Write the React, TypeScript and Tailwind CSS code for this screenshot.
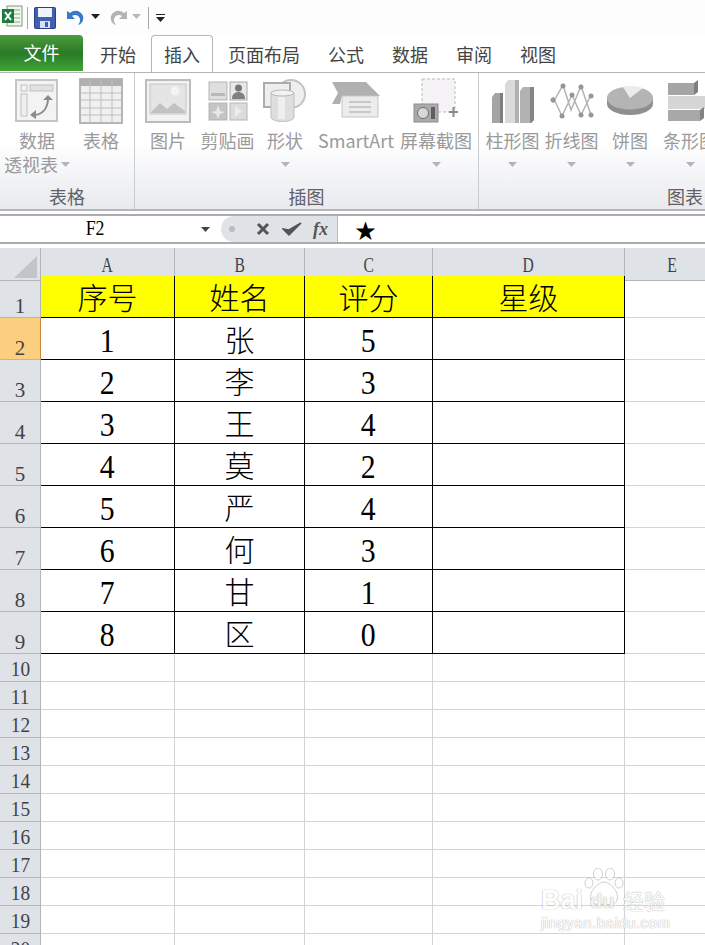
const uiFont = "font-['Noto_Sans_CJK_SC','Liberation_Sans',sans-serif]";
const sheetFont = "font-['Liberation_Serif','Noto_Sans_CJK_SC',serif]";

const tableRows = [
  ["1", "张", "5"],
  ["2", "李", "3"],
  ["3", "王", "4"],
  ["4", "莫", "2"],
  ["5", "严", "4"],
  ["6", "何", "3"],
  ["7", "甘", "1"],
  ["8", "区", "0"],
];
const emptyRows = ["10", "11", "12", "13", "14", "15", "16", "17", "18", "19", "20"];
const sheetCols = "grid-cols-[41px_134px_130px_128px_192px_96px]";

function Caret({ color = "#a3a3a3" }: { color?: string }) {
  return (
    <svg width="9" height="5" viewBox="0 0 9 5">
      <path d="M0 0h9L4.5 5z" fill={color} />
    </svg>
  );
}

function PivotIcon() {
  return (
    <svg width="44" height="44" viewBox="0 0 44 44">
      <rect x="1" y="1" width="41" height="41" fill="#f4f3f4" stroke="#c4c4c4" strokeWidth="2" />
      <rect x="6" y="6" width="6" height="6" fill="#f2f2f2" stroke="#c0c0c0" />
      <rect x="15" y="6" width="23" height="6" fill="#e2e2e2" stroke="#c0c0c0" />
      <rect x="6" y="15" width="6" height="22" fill="#efefef" stroke="#c0c0c0" />
      <path d="M18 36c8 0 14-5 15-15" fill="none" stroke="#8c8c8c" strokeWidth="2" />
      <path d="M28 21l5-5 5 5zM21 31v9l-6-4z" fill="#8c8c8c" />
    </svg>
  );
}

function TableIcon() {
  return (
    <svg width="44" height="46" viewBox="0 0 44 46">
      <rect x="1" y="1" width="42" height="44" fill="#f1f0f1" stroke="#b5b5b5" strokeWidth="2" />
      <rect x="1" y="1" width="42" height="7" fill="#b0b0b0" />
      <path d="M1 15h42M1 22h42M1 30h42M1 37h42M11 1v44M22 1v44M33 1v44" stroke="#bdbdbd" />
    </svg>
  );
}

function PictureIcon() {
  return (
    <svg width="46" height="44" viewBox="0 0 46 44">
      <rect x="1" y="1" width="44" height="42" fill="#f3f2f3" stroke="#bcbcbc" strokeWidth="2" />
      <rect x="5" y="5" width="36" height="30" fill="#e6e5e6" stroke="#c6c6c6" />
      <circle cx="30" cy="12" r="4.5" fill="#f4f4f4" />
      <path d="M6 33l9-9 7 6 7-6 11 8v2H6z" fill="#c2c2c2" />
    </svg>
  );
}

function ClipArtIcon() {
  return (
    <svg width="40" height="40" viewBox="0 0 40 40">
      <rect x="1" y="1" width="18" height="18" fill="#dedede" stroke="#b5b5b5" />
      <path d="M3 12h14v3H3z" fill="#b8b8b8" />
      <rect x="22" y="1" width="17" height="18" fill="#e8e8e8" stroke="#a8a8a8" />
      <circle cx="30.500" cy="7" r="3.500" fill="#777" />
      <path d="M24 18c0-5 3-7 6.500-7s6.500 2 6.500 7z" fill="#808080" />
      <rect x="1" y="22" width="18" height="17" fill="#c4c4c4" stroke="#b5b5b5" />
      <path d="M10 24l2 6 5 1-5 2-2 5-2-5-5-2 5-1z" fill="#e8e8e8" />
      <rect x="22" y="22" width="17" height="17" fill="#dcdcdc" stroke="#b5b5b5" />
      <path d="M27 25l7 5-7 6z" fill="#ececec" />
    </svg>
  );
}

function ShapesIcon() {
  return (
    <svg width="46" height="44" viewBox="0 0 46 44">
      <circle cx="29" cy="15" r="14" fill="#f0eff0" stroke="#c2c2c2" strokeWidth="2" />
      <rect x="2" y="4" width="26" height="24" fill="#eeeeee" stroke="#acacac" strokeWidth="2" />
      <path d="M9 14h23v24c0 6-23 6-23 0z" fill="#dedede" stroke="#c0c0c0" />
      <ellipse cx="20.500" cy="14" rx="11.500" ry="3" fill="#f2f2f2" stroke="#b8b8b8" />
      <rect x="16" y="18" width="7" height="22" fill="#efefef" />
    </svg>
  );
}

function SmartArtIcon() {
  return (
    <svg width="48" height="38" viewBox="0 0 48 38">
      <path d="M0 0h34l14 14H10l-2 8H0l6-11z" fill="#b0b0b0" />
      <path d="M10 14h36v21H10z" fill="#ececec" stroke="#c6c6c6" />
      <path d="M17 20h22M17 25h22M17 30h22" stroke="#a5a5a5" />
    </svg>
  );
}

function ScreenshotIcon() {
  return (
    <svg width="46" height="46" viewBox="0 0 46 46">
      <rect x="9" y="1" width="33" height="33" fill="#f5f3f5" stroke="#bcbcbc" strokeDasharray="3 2" />
      <rect x="1" y="26" width="24" height="18" fill="#aaaaaa" stroke="#8d8d8d" />
      <circle cx="10" cy="35" r="5.500" fill="#d8d8d8" stroke="#6f6f6f" />
      <rect x="18" y="29" width="4" height="12" fill="#5e5e5e" />
      <path d="M36 34h9M40.500 29v10" stroke="#8a8a8a" strokeWidth="2" />
    </svg>
  );
}

function ColumnChartIcon() {
  return (
    <svg width="44" height="44" viewBox="0 0 44 44">
      <path d="M1 18l3-4h8v30H1z" fill="#a4a4a4" />
      <path d="M9 14h3v30H9z" fill="#7e7e7e" />
      <path d="M14 5l3-4h10v43H14z" fill="#dadada" />
      <path d="M24 1h4v43h-4z" fill="#b0b0b0" />
      <path d="M29 12l3-4h11v33l-3 3H29z" fill="#b2b2b2" />
      <path d="M39 8h4v33l-3 3h-1z" fill="#858585" />
    </svg>
  );
}

function LineChartIcon() {
  return (
    <svg width="44" height="36" viewBox="0 0 44 36">
      <path d="M3 20L13 2l8 25 10-24 10 29M3 14l9 19 10-21 9 20 10-20" fill="none" stroke="#b3b3b3" strokeWidth="1.500" />
      <g fill="#969696">
        <circle cx="3" cy="17" r="2.500" />
        <circle cx="13" cy="3" r="2.500" />
        <circle cx="12" cy="33" r="2.500" />
        <circle cx="22" cy="12" r="2.500" />
        <circle cx="31" cy="4" r="2.500" />
        <circle cx="31" cy="32" r="2.500" />
        <circle cx="41" cy="13" r="2.500" />
        <circle cx="41" cy="32" r="2.500" />
      </g>
    </svg>
  );
}

function PieChartIcon() {
  return (
    <svg width="48" height="30" viewBox="0 0 48 30">
      <path d="M1 12v6c0 6 10 11 23 11s23-5 23-11v-6z" fill="#8f8f8f" />
      <ellipse cx="24" cy="12" rx="23" ry="11.500" fill="#b4b4b4" />
      <path d="M24 12L17 1c2-.500 5-1 7-1 6 0 11 1 13 2z" fill="#ececec" />
    </svg>
  );
}

function BarChartIcon() {
  return (
    <svg width="44" height="42" viewBox="0 0 44 42">
      <path d="M0 3h26v12H0z" fill="#a5a5a5" />
      <path d="M26 3l4-3v12l-4 3z" fill="#7f7f7f" />
      <path d="M0 16h44v13H0z" fill="#d6d6d6" />
      <path d="M0 30h32v11H0z" fill="#a8a8a8" />
      <path d="M32 30l4-3v11l-4 3z" fill="#838383" />
    </svg>
  );
}

const ribbonGroups = [
  {
    title: "表格",
    width: "w-[135px]",
    items: [
      { label: "数据", sub: "透视表", caret: true, w: "w-[70px] pl-1", icon: <PivotIcon /> },
      { label: "表格", w: "w-[62px]", icon: <TableIcon /> },
    ],
  },
  {
    title: "插图",
    width: "w-[344px]",
    items: [
      { label: "图片", w: "w-[66px]", icon: <PictureIcon /> },
      { label: "剪贴画", w: "w-[53px]", icon: <ClipArtIcon /> },
      { label: "形状", caret: true, w: "w-[62px]", icon: <ShapesIcon /> },
      { label: "SmartArt", w: "w-[80px]", icon: <SmartArtIcon /> },
      { label: "屏幕截图", caret: true, w: "w-[80px]", icon: <ScreenshotIcon /> },
    ],
  },
  {
    title: "图表",
    width: "w-[240px]",
    items: [
      { label: "柱形图", caret: true, w: "w-[67px]", icon: <ColumnChartIcon /> },
      { label: "折线图", caret: true, w: "w-[51px]", icon: <LineChartIcon /> },
      { label: "饼图", caret: true, w: "w-[66px]", icon: <PieChartIcon /> },
      { label: "条形图", caret: true, w: "w-[54px]", icon: <BarChartIcon /> },
    ],
  },
];

function QuickAccess() {
  return (
    <div className="h-[35px] flex items-center bg-[#fdfdfe]">
      <svg className="ml-0.5 mb-1" width="21" height="24" viewBox="0 0 21 24">
        <rect x="5" y="2" width="15" height="20" fill="#f1f6ef" stroke="#7f9a80" />
        <path d="M11 6h7M11 10h7M11 14h7M11 18h7" stroke="#79b27d" />
        <rect x="0" y="5" width="12" height="14" fill="#1e7b3d" />
        <path d="M3 8l6 8M9 8l-6 8" stroke="#fff" strokeWidth="2" />
      </svg>
      <div className="w-px h-[22px] bg-[#a5a8ad] ml-1" />
      <svg className="ml-1.5" width="22" height="22" viewBox="0 0 22 22">
        <rect x="0.500" y="0.500" width="21" height="21" rx="1" fill="#3f5fb0" stroke="#2b3f85" />
        <rect x="4" y="1" width="14" height="9" fill="#eef3fb" />
        <rect x="6" y="14" width="10" height="7" fill="#d9e2f4" />
        <rect x="11" y="15" width="3" height="5" fill="#3f5fb0" />
      </svg>
      <svg className="ml-2.5" width="18" height="18" viewBox="0 0 18 18">
        <path d="M1 2v8h8L6 7c3-2 7-1 8 3 .500 2-.500 4-2 6 4-1 6-5 5-9C15 2 9 0 4 4z" fill="#3a78c8" />
      </svg>
      <span className="ml-[7px] mb-0.5">
        <Caret color="#222" />
      </span>
      <svg className="ml-[10px]" width="18" height="18" viewBox="0 0 18 18">
        <path d="M17 2v8H9l3-3C9 5 5 6 4 10c-.500 2 .500 4 2 6-4-1-6-5-5-9C3 2 9 0 14 4z" fill="#b4b4b4" />
      </svg>
      <span className="ml-[4px] mb-0.5">
        <Caret color="#b9b9b9" />
      </span>
      <div className="w-px h-[22px] bg-[#a5a8ad] ml-[7px]" />
      <svg className="ml-[7px]" width="9" height="8" viewBox="0 0 9 8">
        <path d="M0 0h9v1H0zM0 3h9L4.500 8z" fill="#222" />
      </svg>
    </div>
  );
}

function Tabs() {
  return (
    <div className={`h-[37px] flex items-stretch text-[18px] leading-none text-[#444] ${uiFont}`}>
      <div className="w-[83px] h-[36px] pb-[2px] flex items-center justify-center text-white rounded-tr-sm bg-gradient-to-b from-[#4c9c3e] via-[#2a7a28] to-[#41a336]">文件</div>
      <div className="w-[68px] flex items-center justify-center pl-[2px]">开始</div>
      <div className="w-[62px] h-[37px] relative z-10 flex items-center justify-center bg-white border border-b-0 border-[#b4b6ba] rounded-t-sm">插入</div>
      <div className="ml-[15px] w-[72px] flex items-center">页面布局</div>
      <div className="ml-[28px] w-[36px] flex items-center">公式</div>
      <div className="ml-[28px] w-[36px] flex items-center">数据</div>
      <div className="ml-[28px] w-[36px] flex items-center">审阅</div>
      <div className="ml-[28px] w-[36px] flex items-center">视图</div>
    </div>
  );
}

function Ribbon() {
  return (
    <div className={`h-[139px] flex overflow-hidden border-t border-[#b4b6ba] border-b-2 bg-gradient-to-b from-white from-50% to-[#e8eaee] ${uiFont}`}>
      {ribbonGroups.map((group, g) => (
        <div key={group.title} className={`${group.width} shrink-0 h-full flex flex-col ${g < 2 ? "border-r border-[#c9ccd1]" : ""}`}>
          <div className="flex h-[112px] pt-[4px]">
            {group.items.map((item) => (
              <div key={item.label} className={`${item.w} shrink-0 flex flex-col items-center`}>
                <div className="h-[48px] flex items-center justify-center">{item.icon}</div>
                <div className="mt-[3px] h-[24px] flex items-center whitespace-nowrap text-[18px] leading-none text-[#9a9a9a]">{item.label}</div>
                {"sub" in item && item.sub ? (
                  <div className="h-[24px] flex items-center gap-[3px] whitespace-nowrap text-[18px] leading-none text-[#9a9a9a]">
                    {item.sub}
                    <Caret color="#b5b5b5" />
                  </div>
                ) : item.caret ? (
                  <div className="h-[24px] flex items-center">
                    <Caret color="#b5b5b5" />
                  </div>
                ) : null}
              </div>
            ))}
          </div>
          <div className={`h-[22px] flex items-center text-[18px] leading-none text-[#5f6166] ${g === 2 ? "pl-[188px]" : "justify-center"}`}>{group.title}</div>
        </div>
      ))}
    </div>
  );
}

function FormulaBar() {
  return (
    <div className="mt-[3px] h-[30px] flex bg-white border-y-2 border-[#a9abaf]">
      <div className={`w-[190px] flex items-center justify-center text-[21px] text-black ${sheetFont}`}>
        <span className="inline-block scale-x-[.85]">F2</span>
      </div>
      <div className="w-[31px] flex items-center justify-start pl-[11px]">
        <Caret color="#444" />
      </div>
      <div className="w-[117px] flex items-center rounded-l-[14px] bg-[#dfe2e7] border-r border-[#b9bcc1] pl-[8px]">
        <div className="w-[6px] h-[6px] bg-[#b9bcc1] rounded-sm" />
        <svg className="ml-[21px]" width="14" height="14" viewBox="0 0 14 14">
          <path d="M2 2l10 10M12 2L2 12" stroke="#555" strokeWidth="3" />
        </svg>
        <svg className="ml-[12px]" width="20" height="16" viewBox="0 0 20 16">
          <path d="M1 8l6 6L19 2 7 9z" fill="#555" stroke="#555" strokeWidth="1.500" />
        </svg>
        <span className={`ml-[11px] text-[18px] leading-none italic font-bold text-[#555] ${sheetFont}`}>fx</span>
      </div>
      <div className={`pl-[17px] flex items-center text-[21px] leading-none text-black ${uiFont}`}>★</div>
    </div>
  );
}

function ColumnHeaders() {
  const head = `flex items-center justify-center pt-[2px] bg-[#dfe2e7] border-r border-b border-[#b3b6bb] text-[20px] text-[#3f4349] ${sheetFont}`;
  return (
    <div className={`mt-[4px] grid ${sheetCols} h-[28px]`}>
      <div className="relative bg-[#dfe2e7] border-r border-b border-[#b3b6bb]">
        <svg className="absolute right-[3px] bottom-[2px]" width="23" height="22" viewBox="0 0 23 22">
          <path d="M23 0v22H0z" fill="#c1c4c8" />
        </svg>
      </div>
      {["A", "B", "C", "D", "E"].map((col) => (
        <div key={col} className={head}>
          <span className="inline-block scale-x-[.78]">{col}</span>
        </div>
      ))}
    </div>
  );
}

function Sheet() {
  const rowHead = `flex justify-center bg-[#dfe2e7] border-r border-b border-[#b3b6bb] text-[21px] text-[#3f4349] ${sheetFont}`;
  const cell = `flex items-center justify-center pt-[5px] border-r border-b border-black leading-none text-black ${sheetFont}`;
  const gridCell = "border-r border-b border-[#d4d4d4]";
  return (
    <div className="flex flex-col">
      <div className={`grid ${sheetCols} auto-rows-[42px]`}>
        <div className={`${rowHead} items-end leading-[22px]`}>1</div>
        {["序号", "姓名", "评分", "星级"].map((title) => (
          <div key={title} className={`${cell} text-[30px] font-light bg-[#ffff00]`}>{title}</div>
        ))}
        <div className={gridCell} />
        {tableRows.map((row, i) => (
          <div key={row[0]} className="contents">
            <div className={`${rowHead} items-end leading-[22px] ${i === 0 ? "bg-[#fbcf7f] border-r-[#c28a3a]" : ""}`}>{i + 2}</div>
            {row.map((value, c) => (
              <div key={c} className={`${cell} ${c === 1 ? "text-[30px] font-light" : "text-[33px]"}`}>
                <span className={c === 1 ? "" : "inline-block scale-x-[.9]"}>{value}</span>
              </div>
            ))}
            <div className={cell} />
            <div className={gridCell} />
          </div>
        ))}
      </div>
      <div className={`grid ${sheetCols} auto-rows-[28px]`}>
        {emptyRows.map((n) => (
          <div key={n} className="contents">
            <div className={`${rowHead} items-center pt-[3px] leading-none`}>
              <span className="inline-block scale-x-[.92]">{n}</span>
            </div>
            <div className={gridCell} />
            <div className={gridCell} />
            <div className={gridCell} />
            <div className={gridCell} />
            <div className={gridCell} />
          </div>
        ))}
      </div>
    </div>
  );
}

function Watermark() {
  const outline = "[text-shadow:0_0_1px_#9a9a9a,0_0_1px_#9a9a9a]";
  return (
    <div className="absolute left-[541px] top-[868px] w-[130px] h-[76px] opacity-70">
      <svg className="absolute left-[43px] top-0" width="40" height="40" viewBox="0 0 40 40">
        <g fill="#fff" stroke="#bdbdbd">
          <ellipse cx="5" cy="15" rx="4" ry="5" />
          <ellipse cx="14" cy="6" rx="4.500" ry="6" />
          <ellipse cx="26" cy="6" rx="4.500" ry="6" />
          <ellipse cx="35" cy="15" rx="4" ry="5" />
          <path d="M20 14c6 0 16 10 13 18-2 5-8 5-13 4-5 1-11 1-13-4-3-8 7-18 13-18z" />
        </g>
      </svg>
      <div className={`absolute left-0 top-[19px] text-[27px] leading-none font-bold text-white font-['Liberation_Sans',sans-serif] ${outline}`}>Bai</div>
      <div className={`absolute left-[49px] top-[23px] text-[20px] leading-none font-bold text-[#efefef] font-['Liberation_Sans',sans-serif] ${outline}`}>du</div>
      <div className={`absolute left-[82px] top-[22px] text-[21px] leading-none text-white ${uiFont} ${outline}`}>经验</div>
      <div className={`absolute left-0 top-[47px] text-[15px] leading-none tracking-[0.5px] text-white font-['Liberation_Sans',sans-serif] ${outline}`}>jingyan.baidu.com</div>
    </div>
  );
}

export default function App() {
  return (
    <div className="relative w-[705px] h-[945px] overflow-hidden bg-white">
      <QuickAccess />
      <Tabs />
      <Ribbon />
      <FormulaBar />
      <ColumnHeaders />
      <Sheet />
      <Watermark />
    </div>
  );
}
